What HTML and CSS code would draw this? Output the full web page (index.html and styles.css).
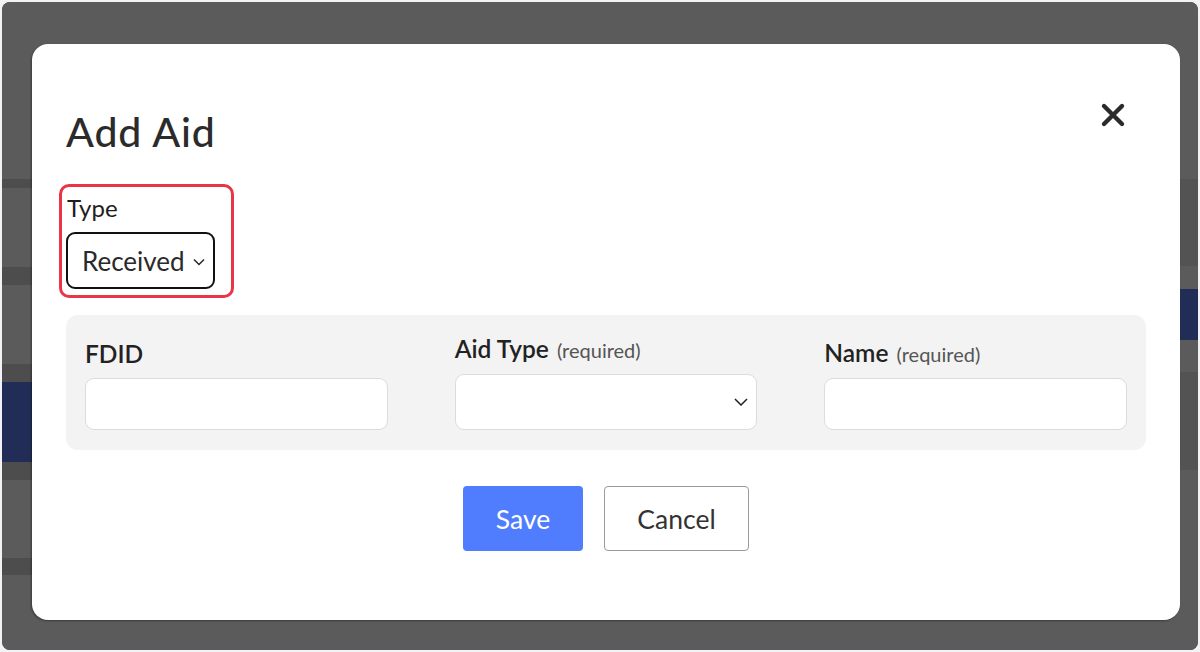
FILE: index.html
```html
<!DOCTYPE html>
<html lang="en">
<head>
  <meta charset="UTF-8">
  <title>Add Aid</title>
  <link rel="stylesheet" href="styles.css">
</head>
<body>

  <div class="screen">
    <!-- dimmed page behind the modal -->
    <div class="backdrop">
      <div class="strip strip-left">
        <div class="band" style="height: 177px"></div>
        <div class="band dark" style="height: 9px"></div>
        <div class="band" style="height: 79px"></div>
        <div class="band dark" style="height: 18px"></div>
        <div class="band" style="height: 79px"></div>
        <div class="band dark" style="height: 18px"></div>
        <div class="band navy" style="height: 80px"></div>
        <div class="band dark" style="height: 18px"></div>
        <div class="band" style="height: 78px"></div>
        <div class="band dark" style="height: 17px"></div>
        <div class="band" style="height: 75px"></div>
      </div>
      <div class="strip strip-right">
        <div class="band" style="height: 177px"></div>
        <div class="band mid" style="height: 87px"></div>
        <div class="band" style="height: 23px"></div>
        <div class="band navy" style="height: 51px"></div>
        <div class="band" style="height: 32px"></div>
        <div class="band mid" style="height: 98px"></div>
        <div class="band" style="height: 180px"></div>
      </div>
    </div>

    <div class="modal">
      <div class="modal-header">
        <h1 class="modal-title">Add Aid</h1>
        <button class="close-btn" aria-label="Close">
          <svg width="26" height="26" viewBox="0 0 26 26">
            <path d="M4 4 L22 22 M22 4 L4 22" stroke="#2b2b2b" stroke-width="4.4" stroke-linecap="round"/>
          </svg>
        </button>
      </div>

      <div class="type-field">
        <label class="type-label">Type</label>
        <div class="type-select">
          <span>Received</span>
          <svg width="12" height="8" viewBox="0 0 12 8">
            <polyline points="1,1.5 6,6.5 11,1.5" fill="none" stroke="#222" stroke-width="1.4"/>
          </svg>
        </div>
      </div>

      <div class="fields-panel">
        <div class="field">
          <label class="field-label">FDID</label>
          <div class="text-input"></div>
        </div>
        <div class="field">
          <label class="field-label">Aid Type <span class="req">(required)</span></label>
          <div class="text-input select-input">
            <svg width="14" height="8" viewBox="0 0 14 8">
              <polyline points="1,1 7,7 13,1" fill="none" stroke="#222" stroke-width="1.5"/>
            </svg>
          </div>
        </div>
        <div class="field">
          <label class="field-label">Name <span class="req">(required)</span></label>
          <div class="text-input"></div>
        </div>
      </div>

      <div class="actions">
        <button class="btn btn-save">Save</button>
        <button class="btn btn-cancel">Cancel</button>
      </div>
    </div>
  </div>

</body>
</html>
```

FILE: styles.css
```css
body {
  margin: 0;
  background-color: #f3f3f6;
  font-family: 'Lato', 'Noto Sans', sans-serif;
  color: #222;
}

.screen {
  margin: 2px;
  height: 648px;
  border-radius: 8px;
  background-color: #5b5b5b;
  overflow: hidden;
  position: relative;
}

.backdrop {
  display: flex;
  justify-content: space-between;
  height: 100%;
}

.strip {
  display: flex;
  flex-direction: column;
}

.strip-left {
  width: 30px;
}

.strip-right {
  width: 20px;
}

.band {
  background-color: #5b5b5b;
}

.band.dark {
  background-color: #4d4d4d;
}

.band.mid {
  background-color: #535353;
}

.band.navy {
  background-color: #212d57;
}

/* modal */

.modal {
  position: absolute;
  left: 30px;
  top: 42px;
  width: 1148px;
  height: 576px;
  box-sizing: border-box;
  background-color: #fff;
  border-radius: 16px;
  box-shadow: -1px 1px 2px rgba(0, 0, 0, 0.35);
  padding: 0 34px;
}

.modal-header {
  display: flex;
  justify-content: space-between;
  align-items: flex-start;
}

.modal-title {
  margin: 64px 0 0;
  font-size: 41px;
  font-weight: 500;
  line-height: 48px;
  letter-spacing: 0.9px;
  color: #2b2b2b;
}

.close-btn {
  margin: 58px 20px 0 0;
  padding: 0;
  border: none;
  background: none;
}

.type-field {
  display: inline-block;
  margin: 28px 0 0 -7px;
  padding: 7px 16px 6px 4px;
  border: 3px solid #ea3447;
  border-radius: 10px;
}

.type-label {
  display: block;
  font-size: 24px;
  line-height: 28px;
  margin-left: 1px;
  margin-bottom: 10px;
  color: #1e1e1e;
}

.type-select {
  display: flex;
  align-items: center;
  gap: 8px;
  height: 53px;
  padding: 0 8px 0 14px;
  border: 2px solid #111;
  border-radius: 9px;
  font-size: 26px;
  color: #2a2a2a;
}

.type-select svg {
  margin-top: 2px;
}

.fields-panel {
  display: grid;
  grid-template-columns: 1fr 1fr 1fr;
  column-gap: 67px;
  margin-top: 17px;
  padding: 20px 19px 20px;
  background-color: #f3f3f3;
  border-radius: 12px;
}

.field {
  display: flex;
  flex-direction: column;
  justify-content: flex-end;
}

.field-label {
  font-size: 24.5px;
  font-weight: 600;
  line-height: 28px;
  margin-bottom: 10px;
  color: #222;
}

.req {
  font-size: 20px;
  font-weight: 400;
  color: #555;
  margin-left: 2px;
}

.text-input {
  height: 50px;
  background-color: #fff;
  border: 1px solid #dcdcdc;
  border-radius: 9px;
}

.select-input {
  height: 54px;
  display: flex;
  align-items: center;
  justify-content: flex-end;
  padding-right: 8px;
}

.actions {
  display: flex;
  justify-content: center;
  gap: 21px;
  margin-top: 36px;
}

.btn {
  height: 65px;
  font-family: 'Lato', 'Noto Sans', sans-serif;
  font-size: 26.5px;
  border-radius: 4px;
  cursor: pointer;
}

.btn-save {
  width: 120px;
  background-color: #4f7dfd;
  color: #fff;
  border: none;
}

.btn-cancel {
  width: 145px;
  background-color: #fff;
  color: #333;
  border: 1px solid #9a9a9a;
}
```
